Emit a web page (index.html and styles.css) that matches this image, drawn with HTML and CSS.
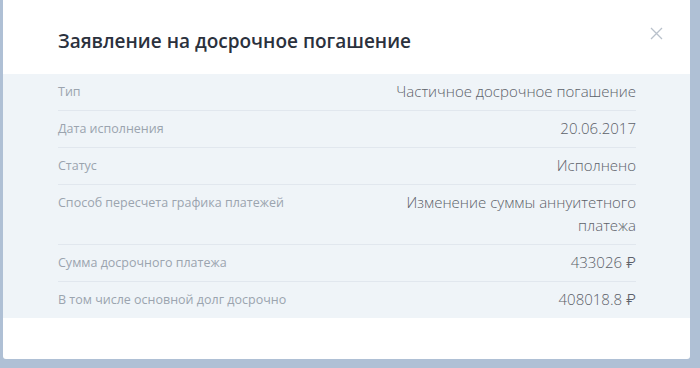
FILE: index.html
```html
<!DOCTYPE html>
<html lang="ru">
  <head>
    <meta charset="UTF-8" />
    <meta name="viewport" content="width=device-width, initial-scale=1.0" />
    <link rel="stylesheet" href="styles.css">
    <title>Заявление на досрочное погашение</title>
  </head>
  <body>
    <div class="overlay">
      <div class="modal">
        <div class="modal-header">
          <h2 class="modal-title">Заявление на досрочное погашение</h2>
          <button class="modal-close" type="button" aria-label="Закрыть">
            <svg width="13" height="13" viewBox="0 0 13 13">
              <path d="M1 1 L12 12 M12 1 L1 12" stroke="#b9c1cb" stroke-width="1.3" fill="none" />
            </svg>
          </button>
        </div>

        <div class="details">
          <div class="row">
            <div class="label">Тип</div>
            <div class="value">Частичное досрочное погашение</div>
          </div>
          <div class="row">
            <div class="label">Дата исполнения</div>
            <div class="value">20.06.2017</div>
          </div>
          <div class="row">
            <div class="label">Статус</div>
            <div class="value">Исполнено</div>
          </div>
          <div class="row">
            <div class="label">Способ пересчета графика платежей</div>
            <div class="value">Изменение суммы аннуитетного платежа</div>
          </div>
          <div class="row">
            <div class="label">Сумма досрочного платежа</div>
            <div class="value">433026 <span class="currency">₽</span></div>
          </div>
          <div class="row">
            <div class="label">В том числе основной долг досрочно</div>
            <div class="value">408018.8 <span class="currency">₽</span></div>
          </div>
        </div>
      </div>
    </div>
  </body>
</html>
```

FILE: styles.css
```css
:root {
  --backdrop: #afc0d5;
  --panel: #eff4f8;
  --divider: #e1e7ee;
  --title: #2b313d;
  --label: #9ba4af;
  --value: #5c6169;
}

* {
  box-sizing: border-box;
}

body {
  margin: 0;
  background-color: var(--backdrop);
  font-family: "Open Sans", "Liberation Sans", sans-serif;
}

/* overlay + modal */
.overlay {
  height: 368px;
  padding: 0 10px 9px 3px;
}

.modal {
  position: relative;
  height: 100%;
  background-color: #fff;
  border-radius: 0 0 3px 3px;
}

.modal-header {
  padding: 27px 55px 19px;
}

.modal-title {
  margin: 0;
  font-size: 19px;
  line-height: 28px;
  font-weight: 600;
  color: var(--title);
}

.modal-close {
  position: absolute;
  top: 27px;
  right: 27px;
  padding: 0;
  border: none;
  background: none;
  cursor: pointer;
}

.modal-close svg {
  display: block;
}

/* details table */
.details {
  background-color: var(--panel);
  padding: 0 54px 0 55px;
}

.row {
  display: flex;
  justify-content: space-between;
  align-items: flex-start;
  gap: 40px;
  padding: 6px 0 7px;
  line-height: 23px;
}

.row + .row {
  border-top: 1px solid var(--divider);
}

.label {
  flex-shrink: 0;
  font-size: 12.5px;
  color: var(--label);
}

.value {
  max-width: 250px;
  text-align: right;
  font-size: 15px;
  font-weight: 300;
  color: var(--value);
}

/* ruble sign is missing from Open Sans */
.currency {
  font-family: Inter, "Noto Sans", sans-serif;
  font-weight: 300;
}
```
